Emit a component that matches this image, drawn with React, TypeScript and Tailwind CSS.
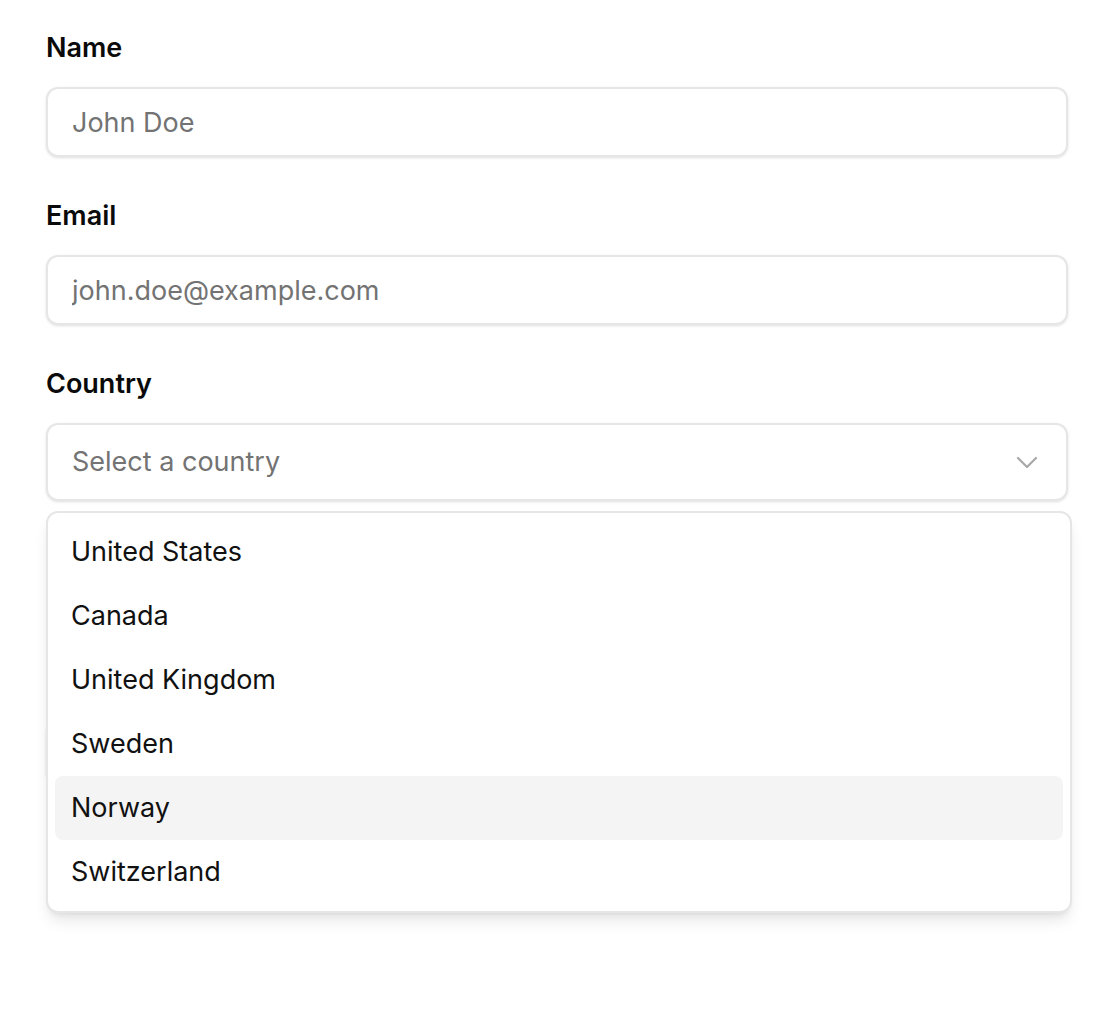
import { useState } from "react";

const countries = [
  "United States",
  "Canada",
  "United Kingdom",
  "Sweden",
  "Norway",
  "Switzerland",
];

function Chevron() {
  return (
    <svg width="22" height="13" viewBox="0 0 22 13" fill="none" className="text-[#a8a8a8]">
      <path d="M2 2l9 9 9-9" stroke="currentColor" strokeWidth="2.2" strokeLinecap="round" strokeLinejoin="round" />
    </svg>
  );
}

export default function App() {
  const [active] = useState("Norway");

  return (
    <div className="min-h-screen bg-white px-[46px] pt-[28px] text-[27px] text-[#111] font-['Inter',sans-serif]">
      {/* Name */}
      <div>
        <label className="block h-[40px] leading-[40px] font-semibold text-[#0a0a0a]">Name</label>
        <input
          placeholder="John Doe"
          className="mt-[19px] h-[70px] w-full rounded-xl border-2 border-[#e6e6e6] px-[24px] shadow-sm outline-none placeholder:text-[#737373]"
        />
      </div>

      {/* Email */}
      <div className="mt-[39px]">
        <label className="block h-[40px] leading-[40px] font-semibold text-[#0a0a0a]">Email</label>
        <input
          placeholder="john.doe@example.com"
          className="mt-[19px] h-[70px] w-full rounded-xl border-2 border-[#e6e6e6] px-[24px] shadow-sm outline-none placeholder:text-[#737373]"
        />
      </div>

      {/* Country */}
      <div className="mt-[39px]">
        <label className="block h-[40px] leading-[40px] font-semibold text-[#0a0a0a]">Country</label>
        <div className="relative mt-[19px]">
          <button className="flex h-[78px] w-full items-center justify-between rounded-xl border-2 border-[#e6e6e6] pl-[24px] pr-[28px] shadow-sm">
            <span className="text-[#737373]">Select a country</span>
            <Chevron />
          </button>

          {/* hidden behind the menu */}
          <div className="mt-[219px] h-[64px] w-full rounded-xl border-2 border-[#e6e6e6] shadow-sm" />

          <div className="absolute left-0 top-[88px] z-10 w-[1026px] rounded-xl border-2 border-[#e6e6e6] bg-white p-[7px] shadow-lg">
            {countries.map((c) => (
              <div
                key={c}
                className={
                  "flex h-[64px] items-center rounded-lg pl-[16px] " +
                  (c === active ? "bg-[#f4f4f4]" : "")
                }
              >
                {c}
              </div>
            ))}
          </div>
        </div>
      </div>
    </div>
  );
}
